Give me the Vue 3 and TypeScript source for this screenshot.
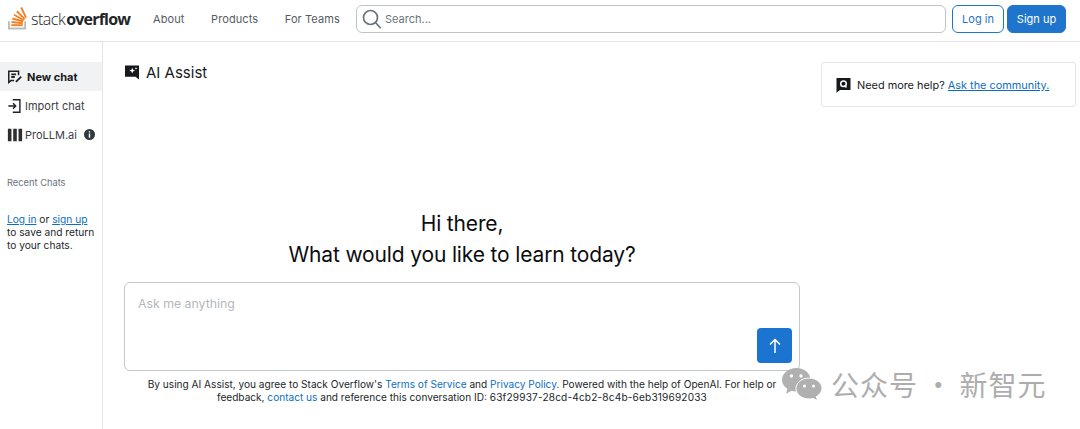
<template>
  <div class="page">
    <header class="topbar">
      <div class="logo">
        <svg class="logo-mark" width="21" height="26" viewBox="0 0 22 26">
          <path d="M1 16.500h2v6.500h15v-6.500h2v8.500H1z" fill="#bcbbbb" />
          <path d="M4.500 19.500h12v2h-12z" fill="#f48024" />
          <path d="M4.800 16.200l11.800 1.300-.2 2-11.800-1.300z" fill="#f48024" />
          <path d="M5.800 12.600l11.400 3.100-.5 1.900-11.400-3.100z" fill="#f48024" />
          <path d="M7.800 8.700l10.300 5.800-1 1.700L6.800 10.400z" fill="#f48024" />
          <path d="M11 5.200l8.400 8.200-1.400 1.400-8.400-8.200z" fill="#f48024" />
          <path d="M15.800 1.500l5 10.600-1.800.9-5-10.600z" fill="#f48024" />
        </svg>
        <span class="logo-text"><span class="logo-thin">stack</span><b>overflow</b></span>
      </div>
      <nav class="nav">
        <a v-for="item in navItems" :key="item">{{ item }}</a>
      </nav>
      <div class="search">
        <svg width="20" height="20" viewBox="0 0 20 20" fill="none" stroke="#6a737c" stroke-width="1.700">
          <circle cx="8.500" cy="8.500" r="7" />
          <path d="M13.500 13.500l5.200 5.700" />
        </svg>
        <span>Search...</span>
      </div>
      <button class="btn btn-outline">Log in</button>
      <button class="btn btn-solid">Sign up</button>
    </header>

    <div class="body">
      <aside class="sidebar">
        <div class="side-item active">
          <svg width="16" height="16" viewBox="0 0 18 18" fill="none" stroke="#1f2328" stroke-width="1.700">
            <path d="M13 7V2.500H2V15l2.500-2H8" />
            <path d="M4.800 6h5.400M4.800 9h4M10 14.500l6-6" stroke-width="2" />
          </svg>
          <span>New chat</span>
        </div>
        <div class="side-item">
          <svg width="16" height="16" viewBox="0 0 18 18" fill="none" stroke="#1f2328" stroke-width="1.600">
            <path d="M6.500 2h8v14h-8" />
            <path d="M1.500 9h8M6.800 6l3 3-3 3" />
          </svg>
          <span>Import chat</span>
        </div>
        <div class="side-item">
          <svg width="16" height="16" viewBox="0 0 18 18" fill="#2b2f33">
            <path d="M1 2h4v14H1zM7 2h4v14H7zM13 2h4v14h-4z" />
          </svg>
          <span>ProLLM.ai</span>
          <svg class="info" width="11" height="11" viewBox="0 0 11 11">
            <circle cx="5.500" cy="5.500" r="5.500" fill="#33383d" />
            <path d="M4.800 2.200h1.400v1.400H4.800zM4.800 4.600h1.400v4.200H4.800z" fill="#fff" />
          </svg>
        </div>
        <p class="recent">Recent Chats</p>
        <p class="signin"><a>Log in</a> or <a>sign up</a><br />to save and return<br />to your chats.</p>
      </aside>

      <main class="chat">
        <h1 class="title">
          <svg width="16" height="16" viewBox="0 0 16 16">
            <path d="M1 1.500h14v14l-3.500-2.800H1z" fill="#17191c" />
            <path d="M8.200 3.800l.8 2 2 .8-2 .8-.8 2-.8-2-2-.8 2-.8zM12 3l.4 1 1 .4-1 .4-.4 1-.4-1-1-.4 1-.4z" fill="#fff" />
          </svg>
          AI Assist
        </h1>
        <div class="hero">
          <div>Hi there,</div>
          <div>What would you like to learn today?</div>
        </div>
        <div class="composer">
          <span class="placeholder">Ask me anything</span>
          <button class="send">
            <svg width="14" height="16" viewBox="0 0 14 16" fill="none" stroke="#fff" stroke-width="1.500">
              <path d="M7 15V1.500M2 6.500l5-5 5 5" />
            </svg>
          </button>
        </div>
        <p class="legal">
          By using AI Assist, you agree to Stack Overflow's <a>Terms of Service</a> and <a>Privacy Policy</a>. Powered with the help of OpenAI. For help or feedback, <a>contact us</a> and reference this conversation ID: <span class="conv-id">{{ conversationId }}</span>
        </p>
      </main>

      <div class="right">
        <div class="help">
          <svg width="15" height="16" viewBox="0 0 15 16">
            <path d="M.5 1h14v12H4l-3.500 2.800z" fill="#17191c" />
            <circle cx="7.500" cy="6.800" r="2.800" fill="none" stroke="#fff" stroke-width="1.500" />
            <path d="M8.500 8.500l2 2" stroke="#fff" stroke-width="1.500" />
          </svg>
          <span>Need more help? <a>Ask the community.</a></span>
        </div>
      </div>
    </div>

    <div class="watermark">
      <svg width="42" height="34" viewBox="0 0 42 34">
        <path d="M15.500 1C7.500 1 1 6.300 1 12.800c0 3.700 2 6.800 5.300 9l-1.200 5 5.200-3c1.700.5 3.300.8 5.200.8 8 0 14-5.300 14-11.800S23.500 1 15.500 1z" fill="#b0b0b0" />
        <path d="M28 11c-7.200 0-13 4.800-13 10.500S20.800 32 28 32c1.400 0 2.800-.2 4-.6l4.500 2.400-1.100-4.200c3.400-2 5.600-4.800 5.600-8.100C41 15.800 35.200 11 28 11z" fill="#b0b0b0" stroke="#fff" stroke-width="1" />
        <circle cx="10.500" cy="9" r="1.700" fill="#fff" />
        <circle cx="20" cy="9" r="1.700" fill="#fff" />
        <circle cx="23.500" cy="19" r="1.500" fill="#fff" />
        <circle cx="32.500" cy="19" r="1.500" fill="#fff" />
      </svg>
      <span>公众号 · 新智元</span>
    </div>
  </div>
</template>

<script setup lang="ts">
const navItems: string[] = ['About', 'Products', 'For Teams']
const conversationId = '63f29937-28cd-4cb2-8c4b-6eb319692033'
</script>

<style>
html,
body {
  margin: 0;
  background: #fff;
}
</style>

<style scoped>
.page {
  position: relative;
  width: 1080px;
  height: 429px;
  overflow: hidden;
  font-family: Inter, "Liberation Sans", sans-serif;
  color: #232629;
  background: #fff;
}

a {
  color: #0d6fbf;
}

.topbar {
  display: flex;
  align-items: center;
  height: 38px;
  padding: 0 14px 3px 7px;
  border-bottom: 1px solid #e3e5e7;
  box-sizing: content-box;
}

.logo {
  display: flex;
  align-items: center;
  gap: 3px;
  width: 146px;
  flex: none;
}

.logo-mark {
  margin-top: -2px;
}

.logo-text {
  font-family: "Open Sans", sans-serif;
  font-size: 16px;
  letter-spacing: -0.5px;
  color: #232629;
  white-space: nowrap;
}

.logo-text b {
  margin-left: 1px;
  letter-spacing: -0.8px;
}

.logo-thin {
  font-weight: 300;
}

.nav {
  display: flex;
  gap: 26.500px;
  width: 203px;
  flex: none;
  font-size: 11px;
  letter-spacing: 0.1px;
}

.nav a {
  color: #555c63;
}

.search {
  display: flex;
  align-items: center;
  gap: 3px;
  flex: 1;
  height: 26px;
  padding-left: 5px;
  border: 1px solid #bfc4c9;
  border-radius: 6px;
  font-size: 11px;
  color: #6a737c;
}

.btn {
  height: 28px;
  border-radius: 6px;
  font-family: inherit;
  font-size: 11px;
  padding: 0;
}

.btn-outline {
  width: 52px;
  margin-left: 6px;
  background: #fff;
  border: 1px solid #1f75c9;
  color: #1f75c9;
}

.btn-solid {
  width: 59px;
  margin-left: 3px;
  background: #1f75cc;
  border: 1px solid #1f75cc;
  color: #fff;
}

.body {
  display: flex;
  height: 387px;
}

.sidebar {
  width: 102px;
  flex: none;
  padding-top: 20px;
  border-right: 1px solid #e3e5e7;
  font-size: 11px;
}

.side-item {
  display: flex;
  align-items: center;
  gap: 2px;
  height: 29px;
  padding-left: 7px;
  color: #3b4045;
}

.side-item.active {
  gap: 4px;
  background: #f1f2f3;
  color: #17191c;
  font-weight: 700;
}

.info {
  margin-left: 5px;
}

.recent {
  margin: 28px 0 0 7px;
  font-size: 9.300px;
  line-height: 12px;
  color: #6a737c;
}

.signin {
  margin: 24px 0 0 7px;
  font-size: 10.200px;
  line-height: 13px;
  color: #232629;
}

.signin a {
  text-decoration: underline;
}

.chat {
  width: 676px;
  flex: none;
  margin-left: 21px;
}

.title {
  display: flex;
  align-items: center;
  gap: 6px;
  height: 20px;
  margin: 20px 0 0;
  font-size: 15px;
  font-weight: 400;
  color: #17191c;
}

.hero {
  margin-top: 126px;
  font-size: 21px;
  line-height: 31px;
  text-align: center;
  color: #0c0d0e;
  letter-spacing: -0.15px;
}

.composer {
  position: relative;
  height: 87px;
  margin-top: 12px;
  border: 1px solid #c4c8cc;
  border-radius: 6px;
}

.placeholder {
  display: block;
  padding: 13px 0 0 13px;
  font-size: 12.300px;
  line-height: 16px;
  color: #b4b8bc;
}

.send {
  position: absolute;
  right: 7px;
  bottom: 7px;
  display: flex;
  align-items: center;
  justify-content: center;
  width: 35px;
  height: 35px;
  padding: 0;
  border: 0;
  border-radius: 4px;
  background: #1b75d0;
}

.legal {
  margin: 7px 0 0;
  padding: 0 20px;
  font-size: 10.100px;
  line-height: 13px;
  text-align: center;
  color: #232629;
}

.conv-id {
  letter-spacing: 0.17px;
}

.right {
  width: 255px;
  flex: none;
  margin-left: 21px;
}

.help {
  display: flex;
  align-items: center;
  gap: 6px;
  height: 42px;
  margin-top: 20px;
  padding: 1px 0 0 14px;
  border: 1px solid #e3e5e7;
  border-radius: 3px;
  box-sizing: content-box;
  font-size: 10.900px;
  color: #17191c;
}

.help a {
  text-decoration: underline;
}

.watermark {
  position: absolute;
  left: 781px;
  top: 367px;
  display: flex;
  align-items: center;
  gap: 8px;
  font-family: "Noto Sans CJK SC", sans-serif;
  font-size: 28px;
  line-height: 34px;
  letter-spacing: 1px;
  word-spacing: -1px;
  color: #adadad;
  white-space: nowrap;
}
</style>
